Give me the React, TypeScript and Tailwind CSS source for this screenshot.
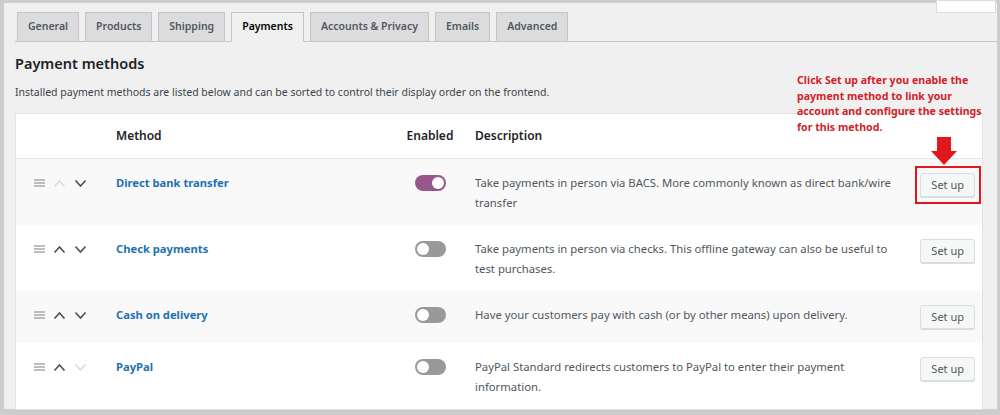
import React from 'react';

const font = { fontFamily: '"Noto Sans", "Open Sans", sans-serif' };

const tabs = ['General', 'Products', 'Shipping', 'Payments', 'Accounts & Privacy', 'Emails', 'Advanced'];

interface Method {
  name: string;
  enabled: boolean;
  desc: string[];
  upDisabled?: boolean;
  downDisabled?: boolean;
}

const methods: Method[] = [
  {
    name: 'Direct bank transfer',
    enabled: true,
    desc: ['Take payments in person via BACS. More commonly known as direct bank/wire', 'transfer'],
    upDisabled: true,
  },
  {
    name: 'Check payments',
    enabled: false,
    desc: ['Take payments in person via checks. This offline gateway can also be useful to', 'test purchases.'],
  },
  {
    name: 'Cash on delivery',
    enabled: false,
    desc: ['Have your customers pay with cash (or by other means) upon delivery.'],
  },
  {
    name: 'PayPal',
    enabled: false,
    desc: ['PayPal Standard redirects customers to PayPal to enter their payment', 'information.'],
    downDisabled: true,
  },
];

const Chevron = ({ up, disabled }: { up?: boolean; disabled?: boolean }) => (
  <svg width="13" height="9" viewBox="0 0 13 9" className={disabled ? 'text-[#dcdcde]' : 'text-[#50575e]'}>
    <path
      d={up ? 'M1.5 7.5 L6.5 2 L11.5 7.5' : 'M1.5 1.5 L6.5 7 L11.5 1.5'}
      fill="none"
      stroke="currentColor"
      strokeWidth="1.8"
    />
  </svg>
);

const Toggle = ({ on }: { on: boolean }) => (
  <div
    className={`w-[31px] h-[16px] rounded-full flex items-center px-[2px] ${
      on ? 'bg-[#96588a] justify-end' : 'bg-[#999999] justify-start'
    }`}
  >
    <div className="w-[12px] h-[12px] rounded-full bg-white" />
  </div>
);

const App: React.FC = () => {
  return (
    <div className="w-[1000px] h-[415px] bg-[#cdcdcd] pl-[4px] pt-[3px] pr-[3px] pb-[6px] overflow-hidden" style={font}>
      <div className="relative h-full bg-[#f0f0f1] pl-[11px] pr-[14px]">
        {/* cut-off button in the corner */}
        <div className="absolute right-[1px] top-[-3px] w-[60px] h-[13px] bg-white border border-[#dcdcde]" />

        <div className="flex gap-[6px] pl-[2px] pt-[9px] border-b border-[#c3c4c7] mr-[-14px]">
          {tabs.map((t) => {
            const active = t === 'Payments';
            return (
              <div
                key={t}
                className={`h-[30px] px-[10px] flex items-center text-[10.5px] font-semibold border border-[#c3c4c7] mb-[-1px] ${
                  active ? 'bg-[#f0f0f1] border-b-[#f0f0f1] text-[#000]' : 'bg-[#dcdcde] text-[#50575e]'
                }`}
              >
                {t}
              </div>
            );
          })}
        </div>

        <h2 className="mt-[11px] text-[14.5px] font-semibold text-[#1d2327] leading-[20px]">Payment methods</h2>
        <p className="mt-[11px] text-[10.5px] text-[#3c434a] leading-[16px]">
          Installed payment methods are listed below and can be sorted to control their display order on the frontend.
        </p>

        <div className="mt-[13px] bg-white border border-[#e2e4e7] shadow-[0_1px_1px_rgba(0,0,0,0.04)]">
          <div className="grid grid-cols-[100px_281px_66px_443px_78px] h-[45px] items-center border-b border-[#e2e4e7] text-[12px] font-semibold text-[#1d2327]">
            <div />
            <div>Method</div>
            <div className="text-center">Enabled</div>
            <div className="pl-[12px]">Description</div>
            <div />
          </div>
          {methods.map((m, i) => (
            <div
              key={m.name}
              className={`grid grid-cols-[100px_281px_66px_443px_78px] pt-[14px] pb-[12px] ${
                i % 2 === 0 ? 'bg-[#f9f9f9]' : 'bg-white'
              } ${i === 2 ? 'pb-[14px]' : ''}`}
            >
              <div className="flex items-center h-[20px] pl-[18px] gap-[8px]">
                <svg width="11" height="8" viewBox="0 0 11 8" className="text-[#a7aaad]">
                  <path d="M0 1h11M0 4h11M0 7h11" stroke="currentColor" strokeWidth="1.3" />
                </svg>
                <Chevron up disabled={m.upDisabled} />
                <Chevron disabled={m.downDisabled} />
              </div>
              <div className="h-[20px] flex items-center text-[11.2px] font-bold text-[#2271b1]">{m.name}</div>
              <div className="h-[20px] flex items-center justify-center">
                <Toggle on={m.enabled} />
              </div>
              <div className="pl-[12px] text-[11.3px] leading-[20px] text-[#50575e]">
                {m.desc.map((d) => (
                  <div key={d}>{d}</div>
                ))}
              </div>
              <div className="flex justify-end pr-[9px]">
                <button className="h-[24px] px-[10px] text-[11px] text-[#50575e] bg-[#f6f7f7] border border-[#dcdcde] rounded-[3px] shadow-[0_1px_0_#dcdcde]">
                  Set up
                </button>
              </div>
            </div>
          ))}
        </div>

        {/* annotation overlay */}
        <div className="absolute left-[793px] top-[70px] whitespace-nowrap text-[10.6px] leading-[15.7px] font-bold text-[#d3222a]">
          <div>Click Set up after you enable the</div>
          <div>payment method to link your</div>
          <div>account and configure the settings</div>
          <div>for this method.</div>
        </div>
        <svg className="absolute left-[926px] top-[134px]" width="28" height="28" viewBox="0 0 28 28">
          <path d="M7 0h14v14h6L14 28 1 14h6z" fill="#e3161c" />
        </svg>
        <div className="absolute left-[911px] top-[163px] w-[66px] h-[38px] border-2 border-[#e3161c]" />
      </div>
    </div>
  );
};

export default App;
